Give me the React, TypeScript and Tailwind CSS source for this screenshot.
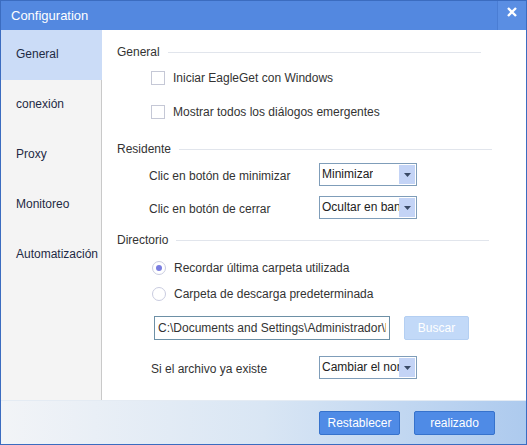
import { useState } from 'react'

const font = { fontFamily: '"Liberation Sans", Arial, sans-serif' }

function SectionTitle({ label }: { label: string }) {
  return (
    <div className="flex items-center h-[20px] pl-[15px]">
      <span className="text-[12px] text-[#333]">{label}</span>
      <div className="ml-[8px] w-[313px] h-px bg-[#e1e5ec]" />
    </div>
  )
}

function Dropdown({ value }: { value: string }) {
  return (
    <div className="w-[98px] h-[23px] border border-[#7f9db9] bg-white flex items-stretch p-[1px]">
      <div className="w-[78px] overflow-hidden flex items-center">
        <span className="block pl-[1px] pb-[2px] text-[12px] text-[#222] whitespace-nowrap overflow-hidden">{value}</span>
      </div>
      {/* flecha */}
      <div className="ml-auto w-[16px] bg-[#c4d4f6] flex items-center justify-center">
        <svg width="7" height="4" viewBox="0 0 7 4">
          <path d="M0 0h7L3.5 4z" fill="#3a4a66" />
        </svg>
      </div>
    </div>
  )
}

export default function App() {
  const [tab, setTab] = useState('General')
  const [dirMode, setDirMode] = useState<'last' | 'default'>('last')
  const [autoStart, setAutoStart] = useState(false)
  const [showDialogs, setShowDialogs] = useState(false)

  const tabs = ['General', 'conexión', 'Proxy', 'Monitoreo', 'Automatización']

  return (
    <div style={font} className="w-[527px] h-[445px] border border-[#3b6cc0] flex flex-col bg-white select-none">
      {/* Barra de título */}
      <div className="h-[29px] bg-[#5388e0] flex items-stretch">
        <div className="flex-1 flex items-center pl-[10px] text-white text-[13px]">Configuration</div>
        <div className="w-[29px] border-l border-[#4a7dd4] bg-[#5a8ee3] flex items-start justify-center pt-[6px]">
          <svg width="10" height="10" viewBox="0 0 10 10">
            <path d="M1 1L9 9M9 1L1 9" stroke="white" strokeWidth="2.4" />
          </svg>
        </div>
      </div>

      <div className="flex h-[370px]">
        {/* Menú lateral */}
        <div className="w-[101px] bg-[#f4f4f4] flex flex-col">
          {tabs.map((t) => (
            <button
              key={t}
              onClick={() => setTab(t)}
              className={`h-[50px] text-left pl-[15px] pb-[2px] text-[12px] text-[#1e2a44] ${
                tab === t ? 'bg-[#cbdcf7]' : 'border-r border-[#c9c9c9]'
              }`}
            >
              {t}
            </button>
          ))}
          <div className="flex-1 border-r border-[#c9c9c9]" />
        </div>

        {/* Contenido */}
        <div className="flex-1 flex flex-col pt-[12px] text-[12px] text-[#333]">
          <SectionTitle label="General" />

          <label className="mt-[6px] h-[20px] flex items-center pl-[49px] gap-[8px]">
            <input type="checkbox" checked={autoStart} onChange={(e) => setAutoStart(e.target.checked)} className="hidden" />
            <span className="w-[14px] h-[14px] border border-[#c5c8d6] bg-white" />
            <span>Iniciar EagleGet con Windows</span>
          </label>

          <label className="mt-[14px] h-[20px] flex items-center pl-[49px] gap-[8px]">
            <input type="checkbox" checked={showDialogs} onChange={(e) => setShowDialogs(e.target.checked)} className="hidden" />
            <span className="w-[14px] h-[14px] border border-[#c5c8d6] bg-white" />
            <span>Mostrar todos los diálogos emergentes</span>
          </label>

          <div className="mt-[17px]">
            <SectionTitle label="Residente" />
          </div>

          <div className="mt-[4px] h-[23px] flex items-center pl-[47px]">
            <span className="w-[170px] pt-[2px]">Clic en botón de minimizar</span>
            <Dropdown value="Minimizar" />
          </div>

          <div className="mt-[10px] h-[23px] flex items-center pl-[47px]">
            <span className="w-[170px] pt-[2px]">Clic en botón de cerrar</span>
            <Dropdown value="Ocultar en bandeja" />
          </div>

          <div className="mt-[11px]">
            <SectionTitle label="Directorio" />
          </div>

          <label className="mt-[8px] h-[20px] flex items-center pl-[50px] gap-[8px]" onClick={() => setDirMode('last')}>
            <span className="w-[14px] h-[14px] rounded-full border border-[#c9cce0] bg-white flex items-center justify-center">
              {dirMode === 'last' && <span className="w-[6px] h-[6px] rounded-full bg-[#7a7de0]" />}
            </span>
            <span>Recordar última carpeta utilizada</span>
          </label>

          <label className="mt-[6px] h-[20px] flex items-center pl-[50px] gap-[8px]" onClick={() => setDirMode('default')}>
            <span className="w-[14px] h-[14px] rounded-full border border-[#c9cce0] bg-white flex items-center justify-center">
              {dirMode === 'default' && <span className="w-[6px] h-[6px] rounded-full bg-[#7a7de0]" />}
            </span>
            <span>Carpeta de descarga predeterminada</span>
          </label>

          <div className="mt-[12px] h-[24px] flex items-center pl-[52px]">
            <div className="w-[236px] h-[24px] border border-[#6d90a6] flex items-center overflow-hidden pl-[3px]">
              <span className="block w-[228px] overflow-hidden whitespace-nowrap text-[#333]">
                C:\Documents and Settings\Administrador\Mis documentos
              </span>
            </div>
            <button className="ml-[14px] w-[65px] h-[24px] bg-[#c2d9f8] border border-[#b4cff2] rounded-[2px] text-white text-[12px]">
              Buscar
            </button>
          </div>

          <div className="mt-[16px] h-[23px] flex items-center pl-[49px]">
            <span className="w-[168px] pt-[2px]">Si el archivo ya existe</span>
            <Dropdown value="Cambiar el nombre" />
          </div>
        </div>
      </div>

      {/* Pie */}
      <div className="flex-1 border-t border-[#e4ebf3] bg-linear-to-r from-[#f2f4f7] via-[#d9e6f4] to-[#adcaee] flex items-center justify-end gap-[14px] pr-[31px]">
        <button className="w-[81px] h-[24px] bg-[#4f8be6] border border-[#3672cc] rounded-[2px] text-white text-[12px]">
          Restablecer
        </button>
        <button className="w-[81px] h-[24px] bg-[#4f8be6] border border-[#3672cc] rounded-[2px] text-white text-[12px]">
          realizado
        </button>
      </div>
    </div>
  )
}
